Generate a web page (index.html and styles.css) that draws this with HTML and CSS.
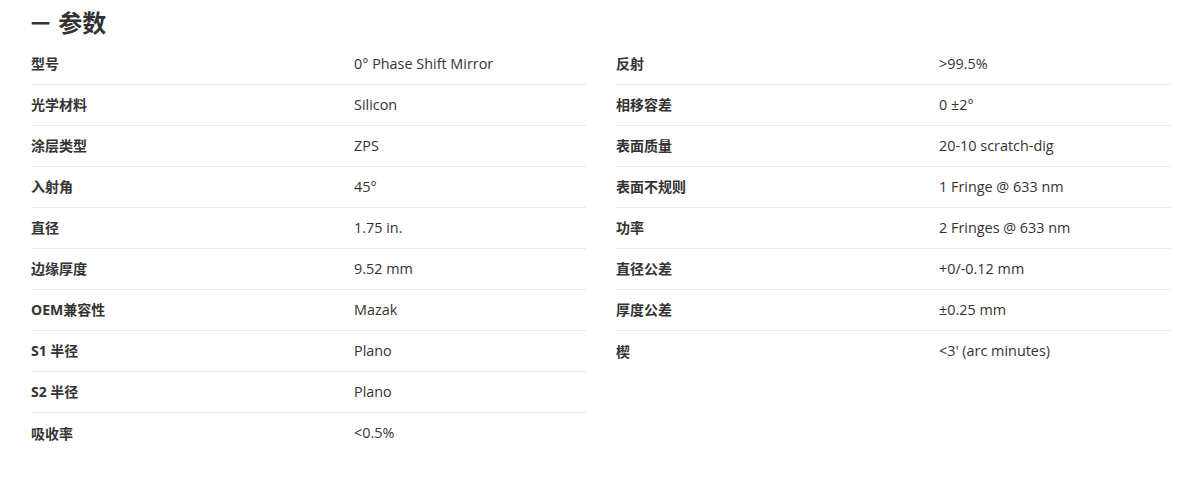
FILE: index.html
```html
<!DOCTYPE html>
<html lang="zh-CN">
<head>
<meta charset="utf-8">
<link rel="stylesheet" href="styles.css">
</head>
<body>
<div class="page">
  <h2 class="title"><span class="dash">一</span> 参数</h2>
  <div class="cols">
    <div class="col">
      <div class="row"><div class="label">型号</div><div class="value">0° Phase Shift Mirror</div></div>
      <div class="row"><div class="label">光学材料</div><div class="value">Silicon</div></div>
      <div class="row"><div class="label">涂层类型</div><div class="value">ZPS</div></div>
      <div class="row"><div class="label">入射角</div><div class="value">45°</div></div>
      <div class="row"><div class="label">直径</div><div class="value">1.75 in.</div></div>
      <div class="row"><div class="label">边缘厚度</div><div class="value">9.52 mm</div></div>
      <div class="row"><div class="label">OEM兼容性</div><div class="value">Mazak</div></div>
      <div class="row"><div class="label">S1 半径</div><div class="value">Plano</div></div>
      <div class="row"><div class="label">S2 半径</div><div class="value">Plano</div></div>
      <div class="row"><div class="label">吸收率</div><div class="value">&lt;0.5%</div></div>
    </div>
    <div class="col">
      <div class="row"><div class="label">反射</div><div class="value">&gt;99.5%</div></div>
      <div class="row"><div class="label">相移容差</div><div class="value">0 ±2°</div></div>
      <div class="row"><div class="label">表面质量</div><div class="value">20-10 scratch-dig</div></div>
      <div class="row"><div class="label">表面不规则</div><div class="value">1 Fringe @ 633 nm</div></div>
      <div class="row"><div class="label">功率</div><div class="value">2 Fringes @ 633 nm</div></div>
      <div class="row"><div class="label">直径公差</div><div class="value">+0/-0.12 mm</div></div>
      <div class="row"><div class="label">厚度公差</div><div class="value">±0.25 mm</div></div>
      <div class="row"><div class="label">楔</div><div class="value">&lt;3' (arc minutes)</div></div>
    </div>
  </div>
</div>
</body>
</html>
```
FILE: styles.css
```css
html, body {
  margin: 0;
  padding: 0;
  background: #fff;
}
body {
  font-family: "Open Sans", "Noto Sans CJK SC", sans-serif;
  color: #333;
}
.page {
  padding: 0 25px 0 31px;
}
.title {
  margin: 0;
  padding-top: 7px;
  height: 37px;
  font-size: 24px;
  line-height: 32px;
  font-weight: 700;
  color: #333;
  box-sizing: border-box;
  white-space: pre;
}
.dash {
  display: inline-block;
  font-size: 19px;
  vertical-align: 1px;
  margin-right: 2px;
}
.cols {
  display: grid;
  grid-template-columns: 555px 555px;
  column-gap: 30px;
  align-items: start;
  margin-top: 7px;
}
.row {
  display: grid;
  grid-template-columns: 323px 1fr;
  height: 41px;
  padding-bottom: 2px;
  align-items: center;
  border-bottom: 1px solid #eaeaea;
  box-sizing: border-box;
  font-size: 14px;
}
.row:last-child {
  border-bottom: none;
}
.label {
  font-weight: 700;
  color: #333;
}
.value {
  color: #333;
  font-size: 14.4px;
}
```
